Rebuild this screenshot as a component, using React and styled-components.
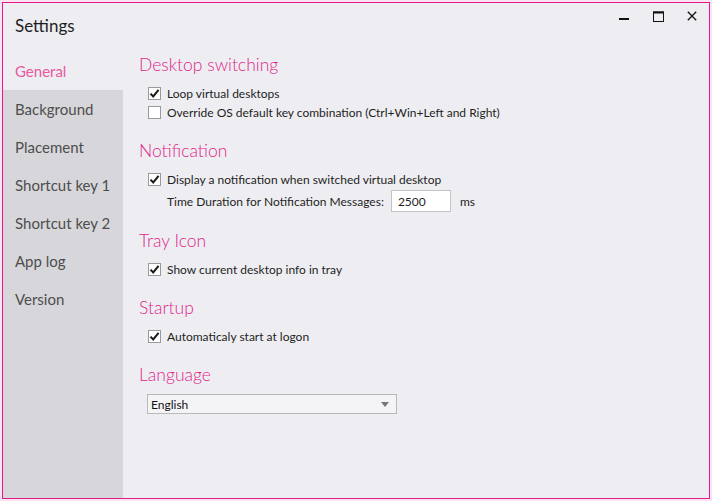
import React from "react";
import styled, { createGlobalStyle } from "styled-components";

const Global = createGlobalStyle`
  html, body { margin: 0; padding: 0; background: #ffffff; }
  body { font-family: Lato, "Noto Sans", sans-serif; }
  * { box-sizing: border-box; }
`;

const Frame = styled.div`
  width: 712px;
  height: 501px;
  padding: 2px;
  background: #fbe3f1;
`;

const Window = styled.div`
  width: 708px;
  height: 497px;
  border: 1px solid #e3198c;
  background: #eeeef2;
  display: flex;
  flex-direction: column;
`;

const TitleBar = styled.div`
  height: 49px;
  display: flex;
  align-items: flex-start;
  justify-content: space-between;
  padding: 12px 0 0 12px;
`;

const Title = styled.div`
  font-size: 17px;
  color: #1e1e1e;
  line-height: 22px;
`;

const Controls = styled.div`
  display: flex;
  align-items: flex-start;
  margin-top: -10px;
`;

const CtrlBtn = styled.div`
  width: 34px;
  height: 22px;
  display: flex;
  align-items: center;
  justify-content: center;
  color: #111;
`;

const Body = styled.div`
  flex: 1;
  display: flex;
  min-height: 0;
`;

const Sidebar = styled.nav`
  width: 120px;
  display: flex;
  flex-direction: column;
  background: #d7d7db;
`;

const NavItem = styled.div`
  height: 38px;
  display: flex;
  align-items: center;
  padding-left: 12px;
  font-size: 15px;
  color: ${(p) => (p.$active ? "#e8579f" : "#4d4d4d")};
  background: ${(p) => (p.$active ? "#eeeef2" : "transparent")};
`;

const Filler = styled.div`
  flex: 1;
`;

const Content = styled.div`
  flex: 1;
  padding: 1px 0 0 16px;
  display: flex;
  flex-direction: column;
  gap: 17px;
`;

const Section = styled.section`
  display: flex;
  flex-direction: column;
  gap: 7px;
`;

const Heading = styled.h2`
  margin: 0;
  font-weight: 300;
  font-size: 17.5px;
  line-height: 24px;
  color: #e0258c;
`;

const Rows = styled.div`
  display: flex;
  flex-direction: column;
  gap: ${(p) => p.$gap || 0}px;
  padding-left: 9px;
`;

const Row = styled.label`
  height: ${(p) => p.$h || 19}px;
  display: flex;
  align-items: center;
  gap: 6px;
  font-size: 12px;
  color: #1e1e1e;
  padding-left: ${(p) => p.$indent || 0}px;
`;

const Box = styled.span`
  width: 13px;
  height: 13px;
  border: 1px solid #9a9a9a;
  background: #ffffff;
  display: flex;
  align-items: center;
  justify-content: center;
  flex: none;
`;

const NumInput = styled.div`
  width: 60px;
  height: 22px;
  border: 1px solid #c3c3c6;
  background: #ffffff;
  display: flex;
  align-items: center;
  padding-left: 6px;
  margin-left: 1px;
  margin-right: 3px;
`;

const Combo = styled.div`
  width: 250px;
  height: 20px;
  margin-left: -1px;
  border: 1px solid #b9b9bd;
  background: #f4f4f6;
  display: flex;
  align-items: center;
  justify-content: space-between;
  padding: 0 7px 0 3px;
  font-size: 12px;
  color: #111;
`;

const Check = ({ on }) => (
  <Box>
    {on && (
      <svg width="11" height="11" viewBox="0 0 11 11">
        <path d="M1.5 5.6 L4.2 8.4 L9.6 1.8" fill="none" stroke="#1a1a1a" strokeWidth="2" />
      </svg>
    )}
  </Box>
);

const nav = ["General", "Background", "Placement", "Shortcut key 1", "Shortcut key 2", "App log", "Version"];

export default function App() {
  return (
    <Frame>
      <Global />
      <Window>
        <TitleBar>
          <Title>Settings</Title>
          <Controls>
            <CtrlBtn>
              <svg width="10" height="10" viewBox="0 0 10 10">
                <rect x="0" y="7" width="10" height="2" fill="#111" />
              </svg>
            </CtrlBtn>
            <CtrlBtn>
              <svg width="11" height="11" viewBox="0 0 11 11">
                <rect x="0.5" y="1" width="10" height="9.5" fill="none" stroke="#111" strokeWidth="1" />
                <rect x="0" y="0.5" width="11" height="2" fill="#111" />
              </svg>
            </CtrlBtn>
            <CtrlBtn>
              <svg width="10" height="10" viewBox="0 0 10 10">
                <path d="M0.8 0.8 L9.2 9.2 M9.2 0.8 L0.8 9.2" stroke="#111" strokeWidth="1.3" />
              </svg>
            </CtrlBtn>
          </Controls>
        </TitleBar>
        <Body>
          <Sidebar>
            {nav.map((n, i) => (
              <NavItem key={n} $active={i === 0}>
                {n}
              </NavItem>
            ))}
            <Filler />
          </Sidebar>
          <Content>
            <Section>
              <Heading>Desktop switching</Heading>
              <Rows>
                <Row>
                  <Check on />
                  Loop virtual desktops
                </Row>
                <Row>
                  <Check />
                  Override OS default key combination (Ctrl+Win+Left and Right)
                </Row>
              </Rows>
            </Section>
            <Section>
              <Heading>Notification</Heading>
              <Rows $gap={1}>
                <Row>
                  <Check on />
                  Display a notification when switched virtual desktop
                </Row>
                <Row $h={22} $indent={19}>
                  Time Duration for Notification Messages:
                  <NumInput>2500</NumInput>
                  ms
                </Row>
              </Rows>
            </Section>
            <Section>
              <Heading>Tray Icon</Heading>
              <Rows>
                <Row>
                  <Check on />
                  Show current desktop info in tray
                </Row>
              </Rows>
            </Section>
            <Section>
              <Heading>Startup</Heading>
              <Rows>
                <Row>
                  <Check on />
                  Automaticaly start at logon
                </Row>
              </Rows>
            </Section>
            <Section>
              <Heading>Language</Heading>
              <Rows>
                <Combo>
                  English
                  <svg width="8" height="5" viewBox="0 0 8 5">
                    <path d="M0 0 L8 0 L4 5 Z" fill="#777" />
                  </svg>
                </Combo>
              </Rows>
            </Section>
          </Content>
        </Body>
      </Window>
    </Frame>
  );
}
